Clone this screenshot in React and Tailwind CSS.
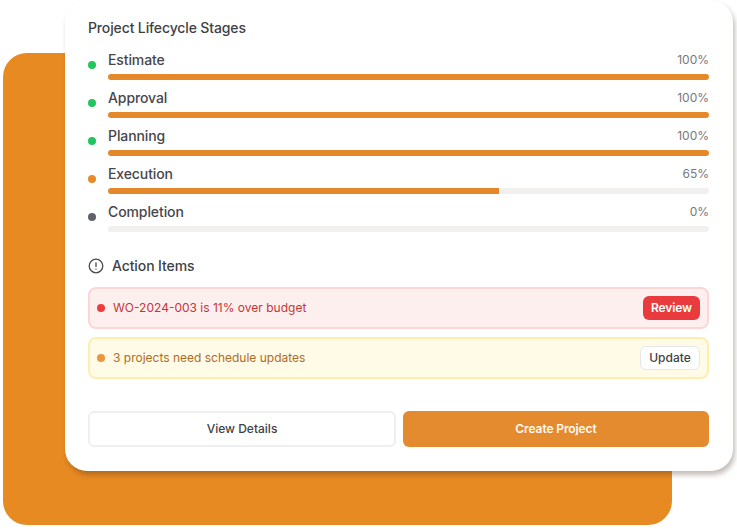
import React from "react";

const stages = [
  { name: "Estimate", pct: 100, dot: "bg-[#22c55e]", label: "100%" },
  { name: "Approval", pct: 100, dot: "bg-[#22c55e]", label: "100%" },
  { name: "Planning", pct: 100, dot: "bg-[#22c55e]", label: "100%" },
  { name: "Execution", pct: 65, dot: "bg-[#e68a2e]", label: "65%" },
  { name: "Completion", pct: 0, dot: "bg-[#5f6368]", label: "0%" },
];

function Stage({ s }) {
  return (
    <div className="flex items-start h-[38px]">
      <span className={`w-2 h-2 rounded-full mt-[11px] mr-3 shrink-0 ${s.dot}`} />
      <div className="flex-1">
        <div className="flex justify-between items-center h-[20px]">
          <span className="text-sm font-medium text-[#46464c] tracking-[-0.1px]">{s.name}</span>
          <span className="text-xs text-[#77777c]">{s.label}</span>
        </div>
        <div className="mt-[4px] h-[6px] rounded-full bg-[#f1f0ee] overflow-hidden">
          <div className="h-full bg-[#e5882a]" style={{ width: `${s.pct}%` }} />
        </div>
      </div>
    </div>
  );
}

export default function App() {
  return (
    <div className="relative w-[737px] h-[529px] bg-white overflow-hidden font-['Inter',sans-serif]">
      <div className="absolute left-[3px] top-[53px] w-[669px] h-[472px] rounded-[24px] bg-[#e88a22]" />
      <div className="relative ml-[65px] w-[668px] h-[471px] bg-white rounded-[22px] pl-[23px] pr-[24px] pt-[18px] shadow-[2px_4px_5px_rgba(60,40,20,0.3)]">
        <h2 className="text-sm font-medium text-[#3f3f46] leading-[20px] tracking-[-0.13px]">Project Lifecycle Stages</h2>
        <div className="mt-[12px]">
          {stages.map((s) => (
            <Stage key={s.name} s={s} />
          ))}
        </div>
        <div className="flex items-center gap-2 mt-[16px] h-[20px]">
          <svg width="16" height="16" viewBox="0 0 16 16" fill="none" stroke="#4b4b50" strokeWidth="1.3" strokeLinecap="round">
            <circle cx="8" cy="8" r="6.8" />
            <path d="M8 4.8v3.6M8 11v.1" />
          </svg>
          <span className="text-sm font-medium text-[#3f3f46] tracking-[-0.1px]">Action Items</span>
        </div>
        <div className="mt-[11px] flex flex-col gap-2">
          <div className="h-[42px] flex items-center justify-between rounded-lg border-2 border-[#fdd5d5] bg-[#feefef] pl-[7px] pr-[7px]">
            <div className="flex items-center gap-2">
              <span className="w-2 h-2 rounded-full bg-[#ef3b3b]" />
              <span className="text-xs text-[#c5363a]">WO-2024-003 is 11% over budget</span>
            </div>
            <button className="w-[57px] h-[24px] rounded-md bg-[#e93a3d] text-white text-xs font-semibold tracking-[-0.1px]">Review</button>
          </div>
          <div className="h-[42px] flex items-center justify-between rounded-lg border-2 border-[#fdeeb0] bg-[#fffbe6] pl-[7px] pr-[7px]">
            <div className="flex items-center gap-2">
              <span className="w-2 h-2 rounded-full bg-[#e9963e]" />
              <span className="text-xs text-[#b26a24]">3 projects need schedule updates</span>
            </div>
            <button className="w-[60px] h-[24px] rounded-md bg-white border border-[#e5e7eb] text-[#3f3f46] text-xs font-medium">Update</button>
          </div>
        </div>
        <div className="mt-[32px] flex gap-[7px]">
          <button className="w-[308px] h-[36px] rounded-md bg-white border-2 border-[#eeeff1] text-[#3f3f46] text-xs font-medium">View Details</button>
          <button className="flex-1 h-[36px] rounded-md bg-[#e48b2f] text-[#fffaf2] text-xs font-semibold tracking-[-0.1px]">Create Project</button>
        </div>
      </div>
    </div>
  );
}
